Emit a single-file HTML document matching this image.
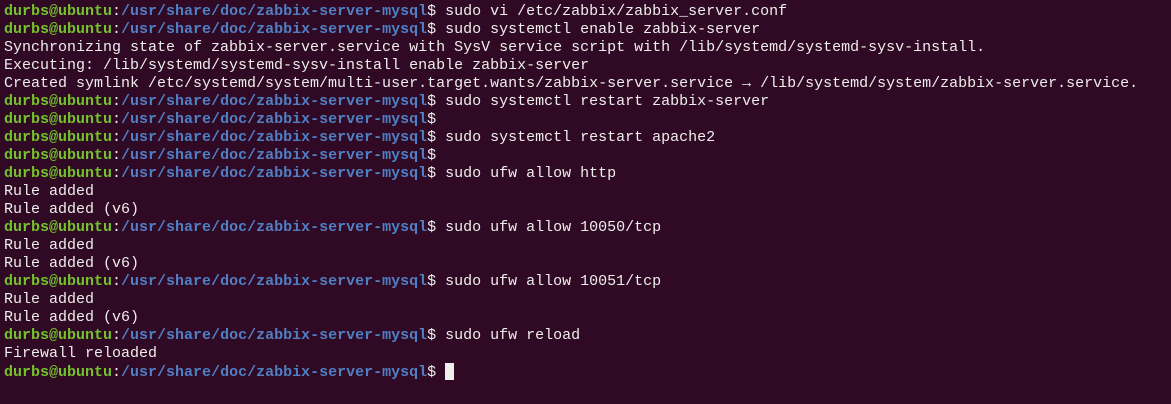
<!DOCTYPE html>
<html><head><meta charset="utf-8"><style>
html,body{margin:0;padding:0;background:#300a24;width:1171px;height:404px;overflow:hidden}
pre{margin:0;padding:3px 0 0 4px;font-family:"Liberation Mono","DejaVu Sans Mono",monospace;font-size:15px;line-height:18px;color:#eeeeec;white-space:pre}
.g{color:#74c22c;font-weight:bold}
.b{color:#4f7fc4;font-weight:bold}
.c{display:inline-block;width:9px;height:17px;background:#eeeeec;vertical-align:-4px}
</style></head><body><pre><span class="g">durbs@ubuntu</span>:<span class="b">/usr/share/doc/zabbix-server-mysql</span>$ sudo vi /etc/zabbix/zabbix_server.conf
<span class="g">durbs@ubuntu</span>:<span class="b">/usr/share/doc/zabbix-server-mysql</span>$ sudo systemctl enable zabbix-server
Synchronizing state of zabbix-server.service with SysV service script with /lib/systemd/systemd-sysv-install.
Executing: /lib/systemd/systemd-sysv-install enable zabbix-server
Created symlink /etc/systemd/system/multi-user.target.wants/zabbix-server.service → /lib/systemd/system/zabbix-server.service.
<span class="g">durbs@ubuntu</span>:<span class="b">/usr/share/doc/zabbix-server-mysql</span>$ sudo systemctl restart zabbix-server
<span class="g">durbs@ubuntu</span>:<span class="b">/usr/share/doc/zabbix-server-mysql</span>$
<span class="g">durbs@ubuntu</span>:<span class="b">/usr/share/doc/zabbix-server-mysql</span>$ sudo systemctl restart apache2
<span class="g">durbs@ubuntu</span>:<span class="b">/usr/share/doc/zabbix-server-mysql</span>$
<span class="g">durbs@ubuntu</span>:<span class="b">/usr/share/doc/zabbix-server-mysql</span>$ sudo ufw allow http
Rule added
Rule added (v6)
<span class="g">durbs@ubuntu</span>:<span class="b">/usr/share/doc/zabbix-server-mysql</span>$ sudo ufw allow 10050/tcp
Rule added
Rule added (v6)
<span class="g">durbs@ubuntu</span>:<span class="b">/usr/share/doc/zabbix-server-mysql</span>$ sudo ufw allow 10051/tcp
Rule added
Rule added (v6)
<span class="g">durbs@ubuntu</span>:<span class="b">/usr/share/doc/zabbix-server-mysql</span>$ sudo ufw reload
Firewall reloaded
<span class="g">durbs@ubuntu</span>:<span class="b">/usr/share/doc/zabbix-server-mysql</span>$ <span class="c"></span></pre></body></html>
